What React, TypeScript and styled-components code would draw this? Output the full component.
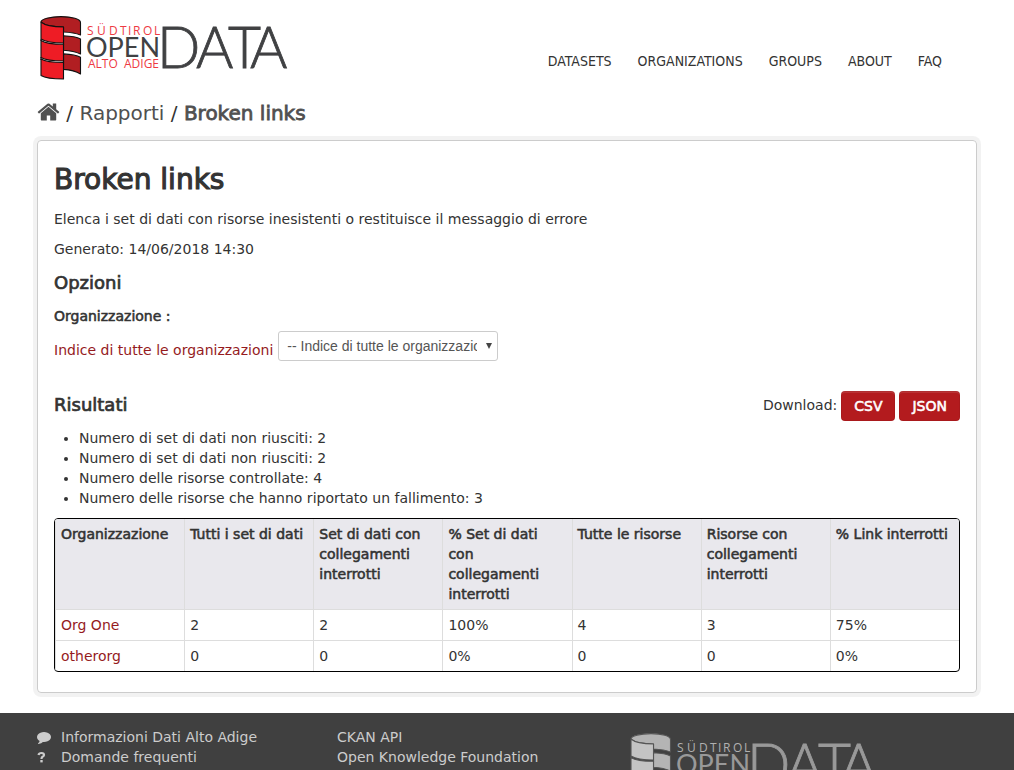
import React from "react";
import styled, { createGlobalStyle, css } from "styled-components";

const GlobalStyle = createGlobalStyle`
  * { box-sizing: border-box; }
  body {
    margin: 0;
    background: #fff;
    color: #333;
    font: 14px/20px "DejaVu Sans", Verdana, sans-serif;
  }
`;

const heavy = css`
  font-weight: 400;
  -webkit-text-stroke: 0.04em currentColor;
`;

const Container = styled.div`
  max-width: 940px;
  margin: 0 auto;
`;

const Page = styled.div`
  padding: 0 37px;
`;

const Header = styled.header`
  display: flex;
  justify-content: space-between;
  align-items: flex-end;
  height: 82px;
`;

const HomeLink = styled.a`
  display: block;
  height: 72px;
`;

const Nav = styled.nav`
  display: flex;
  gap: 26px;
  padding: 0 35px 11px 0;
`;

const NavLink = styled.a`
  color: #333;
  font-family: "DejaVu Sans Condensed", "DejaVu Sans", sans-serif;
  text-decoration: none;
  text-transform: uppercase;
`;

const Breadcrumb = styled.nav`
  padding: 16px 0 12px;
  font-size: 20px;
  line-height: 30px;

  svg {
    display: inline-block;
    height: 24px;
    vertical-align: -4px;
  }
`;

const Crumb = styled.a<{ $current?: boolean }>`
  color: #505050;
  text-decoration: none;
  ${(p) => p.$current && heavy}
`;

const Panel = styled.main`
  padding: 20px 16px;
  border: 1px solid #ccc;
  border-radius: 4px;
  box-shadow: 0 0 0 4px rgba(0, 0, 0, 0.05);
`;

const Title = styled.h1`
  ${heavy}
  margin: 0 0 10px;
  font-size: 28px;
  line-height: 38px;
`;

const Heading = styled.h2`
  ${heavy}
  margin: 0;
  font-size: 18px;
  line-height: 28px;
`;

const Text = styled.p`
  margin: 0 0 10px;
`;

const FieldLabel = styled.label`
  ${heavy}
  display: block;
  margin: 9px 0 5px;
`;

const FieldRow = styled.div`
  display: flex;
  align-items: flex-end;
  gap: 5px;
  line-height: 22px;
`;

const TextLink = styled.a`
  color: #951b1e;
  text-decoration: none;
`;

const SelectBox = styled.span`
  display: inline-grid;
  align-items: center;
  width: 220px;
  height: 30px;
  border: 1px solid #ccc;
  border-radius: 3px;
`;

const Select = styled.select`
  grid-area: 1 / 1;
  width: 100%;
  height: 28px;
  padding: 0 20px 0 8px;
  border: 0;
  background: transparent;
  color: #555;
  font: 14px/20px "Liberation Sans", Arial, sans-serif;
  appearance: none;
`;

const SelectArrow = styled.svg`
  grid-area: 1 / 1;
  justify-self: end;
  margin-right: 5px;
  pointer-events: none;
`;

const ResultsHeader = styled.div`
  display: flex;
  justify-content: space-between;
  align-items: flex-start;
  margin-top: 30px;
`;

const Downloads = styled.div`
  display: flex;
  align-items: flex-start;
  gap: 4px;
  line-height: 28px;
`;

const DownloadButton = styled.button`
  ${heavy}
  height: 30px;
  padding: 0 13px;
  border: 0;
  border-radius: 4px;
  background: #b31b1e;
  box-shadow: inset 0 0 0 1px rgba(0, 0, 0, 0.05), inset 0 2px 0 rgba(255, 255, 255, 0.1);
  color: #fff;
  font-family: inherit;
  font-size: 14px;
  line-height: 20px;
`;

const Summary = styled.ul`
  margin: 7px 0 10px;
  padding: 0 0 0 25px;
`;

const Table = styled.table`
  width: 100%;
  border: 1px solid #000;
  border-radius: 4px;
  border-spacing: 0;
  table-layout: fixed;
  overflow: hidden;
  text-align: left;
`;

const HeadCell = styled.th`
  ${heavy}
  padding: 5px;
  border-left: 1px solid #ddd;
  background: #e9e8ed;
  vertical-align: top;
`;

const Cell = styled.td`
  padding: 5px;
  border-top: 1px solid #ddd;
  border-left: 1px solid #ddd;
`;

const Footer = styled.footer`
  margin-top: 20px;
  padding: 14px 37px 20px;
  background: #404040;
  color: #ccc;
`;

const FooterColumns = styled(Container)`
  display: grid;
  grid-template-columns: 300px 290px 1fr;
`;

const FooterList = styled.ul`
  margin: 0;
  padding: 0;
  list-style: none;
`;

const FooterItem = styled.li`
  display: flex;
  align-items: center;
  height: 20px;
`;

const FooterLink = styled.a`
  display: flex;
  align-items: center;
  color: #ccc;
  text-decoration: none;
`;

const IconSlot = styled.span`
  display: flex;
  width: 24px;
`;

type LogoTone = { front: string; back: string; line: string; small: string; large: string };

const colourTone: LogoTone = { front: "#ee1c25", back: "#b11e22", line: "#111", small: "#ee3a43", large: "#404143" };
const greyTone: LogoTone = { front: "#c4c4c4", back: "#b4b4b4", line: "#555", small: "#b0b0b0", large: "#999" };

const LogoSmallText = styled.text`
  font-family: "Open Sans", "Noto Sans", sans-serif;
  font-size: 12px;
`;

const LogoLargeText = styled.text`
  font-family: Lato, "Open Sans", sans-serif;
`;

function Logo({ tone }: { tone: LogoTone }) {
  return (
    <svg width="252" height="72" viewBox="0 0 252 72" role="img" aria-label="Open Data Südtirol Alto Adige">
      <g stroke={tone.line} strokeWidth="1.1" strokeLinejoin="round">
        <g fill={tone.back}>
          <path d="M4 12C4 9 13 6.600 24 6.600C35 6.600 43.500 9 43.500 12.500V25C39 23.200 33 22.300 26.500 22V17C16 17 6 15 4 12Z" />
          <path d="M26.500 25.700C33 26 39.500 26.800 43.500 29V44C39 41.800 33 40.600 26.500 40.200Z" />
          <path d="M26.500 43.900C33 44.200 39.500 45 43.500 47.300V64C39 61.200 33 59.800 26.500 59.400Z" />
        </g>
        <g fill={tone.front}>
          <path d="M4 12C8 15.500 16 17 26.500 17V33C16 33 8 31.500 4 29Z" />
          <path d="M4 30.500C8 33 16 34.300 26.500 34.300V51C16 51 8 50 4 47.500Z" />
          <path d="M4 49C8 51.500 16 52.500 26.500 52.500V69C16 69 8 68 4 65.500Z" />
        </g>
        <path d="M4 29V31M4 47V50M26.500 33V35M26.500 51V53" fill="none" />
      </g>
      <LogoSmallText x="50 60 72 83 91 96 106 117" y="25" fill={tone.small}>SÜDTIROL</LogoSmallText>
      <LogoLargeText x="49" y="47" fontSize="27" fill={tone.large}>OPEN</LogoLargeText>
      <LogoSmallText x="51" y="58" fill={tone.small}>ALTO</LogoSmallText>
      <LogoSmallText x="87" y="58" fill={tone.small}>ADIGE</LogoSmallText>
      <LogoLargeText
        x="120 159 191 213"
        y="58"
        fontSize="57"
        fontWeight="300"
        fill={tone.large}
        stroke={tone.large}
        strokeWidth="0.8"
      >
        DATA
      </LogoLargeText>
    </svg>
  );
}

const HomeIcon = () => (
  <svg width="23" height="24" viewBox="0 0 1664 1792" fill="currentColor" aria-hidden="true">
    <path d="M1408 992v480q0 26-19 45t-45 19H960v-384H704v384H320q-26 0-45-19t-19-45V992q0-1 .5-3t.5-3l575-474 575 474q1 2 1 6zm223-69l-62 74q-8 9-21 11h-3q-13 0-21-7L832 424l-692 577q-12 8-24 7-13-2-21-11l-62-74q-8-10-7-23.500t11-21.500l719-599q32-26 76-26t76 26l244 204V288q0-14 9-23t23-9h192q14 0 23 9t9 23v408l219 182q10 8 11 21.500t-7 23.500z" />
  </svg>
);

const CommentIcon = () => (
  <svg width="14" height="14" viewBox="0 0 1792 1792" fill="currentColor" aria-hidden="true">
    <path d="M1792 896q0 174-120 321.500t-326 233-450 85.500q-70 0-145-8-198 175-460 242-49 14-114 22h-5q-15 0-27-10.500t-16-27.500v-1q-3-4-.5-12t2-10 4.500-9.500l6-9 7-8.500 8-9q7-8 31-34.500t34.500-38 31-39.500 32.500-51 27-59 26-76q-157-89-247.500-220t-90.500-281q0-174 120-321.500t326-233 450-85.500 450 85.500 326 233 120 321.500z" />
  </svg>
);

const QuestionIcon = () => (
  <svg width="9" height="12" viewBox="0 0 9 12" aria-hidden="true">
    <path d="M1.500 4Q2 2 4.500 2Q7 2 7 4Q7 5 5.500 5.800Q4.500 6.400 4.500 8" fill="none" stroke="currentColor" strokeWidth="2.200" />
    <path d="M3.300 9H5.700V11.400H3.300Z" fill="currentColor" />
  </svg>
);

const navItems = ["Datasets", "Organizations", "Groups", "About", "FAQ"];

const summary = [
  "Numero di set di dati non riusciti: 2",
  "Numero di set di dati non riusciti: 2",
  "Numero delle risorse controllate: 4",
  "Numero delle risorse che hanno riportato un fallimento: 3",
];

const columns = [
  "Organizzazione",
  "Tutti i set di dati",
  "Set di dati con collegamenti interrotti",
  "% Set di dati con collegamenti interrotti",
  "Tutte le risorse",
  "Risorse con collegamenti interrotti",
  "% Link interrotti",
];

const rows = [
  ["Org One", "2", "2", "100%", "4", "3", "75%"],
  ["otherorg", "0", "0", "0%", "0", "0", "0%"],
];

export default function App() {
  return (
    <>
      <GlobalStyle />
      <Page>
        <Container>
          <Header>
            <HomeLink href="#"><Logo tone={colourTone} /></HomeLink>
            <Nav aria-label="Main">
              {navItems.map((item) => <NavLink key={item} href="#">{item}</NavLink>)}
            </Nav>
          </Header>
          <Breadcrumb aria-label="Breadcrumb">
            <Crumb href="#" aria-label="Home"><HomeIcon /></Crumb>
            {" / "}
            <Crumb href="#">Rapporti</Crumb>
            {" / "}
            <Crumb href="#" $current aria-current="page">Broken links</Crumb>
          </Breadcrumb>
          <Panel>
            <Title>Broken links</Title>
            <Text>Elenca i set di dati con risorse inesistenti o restituisce il messaggio di errore</Text>
            <Text>Generato: 14/06/2018 14:30</Text>
            <Heading>Opzioni</Heading>
            <FieldLabel htmlFor="organization">Organizzazione :</FieldLabel>
            <FieldRow>
              <TextLink href="#">Indice di tutte le organizzazioni</TextLink>
              <SelectBox>
                <Select id="organization">
                  <option>-- Indice di tutte le organizzazioni --</option>
                </Select>
                <SelectArrow width="6" height="6" viewBox="0 0 6 6" aria-hidden="true">
                  <path d="M0 0H6L3 6Z" fill="#444" />
                </SelectArrow>
              </SelectBox>
            </FieldRow>
            <ResultsHeader>
              <Heading>Risultati</Heading>
              <Downloads>
                <span>Download:</span>
                <DownloadButton type="button">CSV</DownloadButton>
                <DownloadButton type="button">JSON</DownloadButton>
              </Downloads>
            </ResultsHeader>
            <Summary>
              {summary.map((line, i) => <li key={i}>{line}</li>)}
            </Summary>
            <Table>
              <thead>
                <tr>{columns.map((c) => <HeadCell key={c} scope="col">{c}</HeadCell>)}</tr>
              </thead>
              <tbody>
                {rows.map((row) => (
                  <tr key={row[0]}>
                    {row.map((value, i) => (
                      <Cell key={i}>{i === 0 ? <TextLink href="#">{value}</TextLink> : value}</Cell>
                    ))}
                  </tr>
                ))}
              </tbody>
            </Table>
          </Panel>
        </Container>
      </Page>
      <Footer>
        <FooterColumns>
          <FooterList>
            <FooterItem><FooterLink href="#"><IconSlot><CommentIcon /></IconSlot>Informazioni Dati Alto Adige</FooterLink></FooterItem>
            <FooterItem><FooterLink href="#"><IconSlot><QuestionIcon /></IconSlot>Domande frequenti</FooterLink></FooterItem>
          </FooterList>
          <FooterList>
            <FooterItem><FooterLink href="#">CKAN API</FooterLink></FooterItem>
            <FooterItem><FooterLink href="#">Open Knowledge Foundation</FooterLink></FooterItem>
          </FooterList>
          <Logo tone={greyTone} />
        </FooterColumns>
      </Footer>
    </>
  );
}
